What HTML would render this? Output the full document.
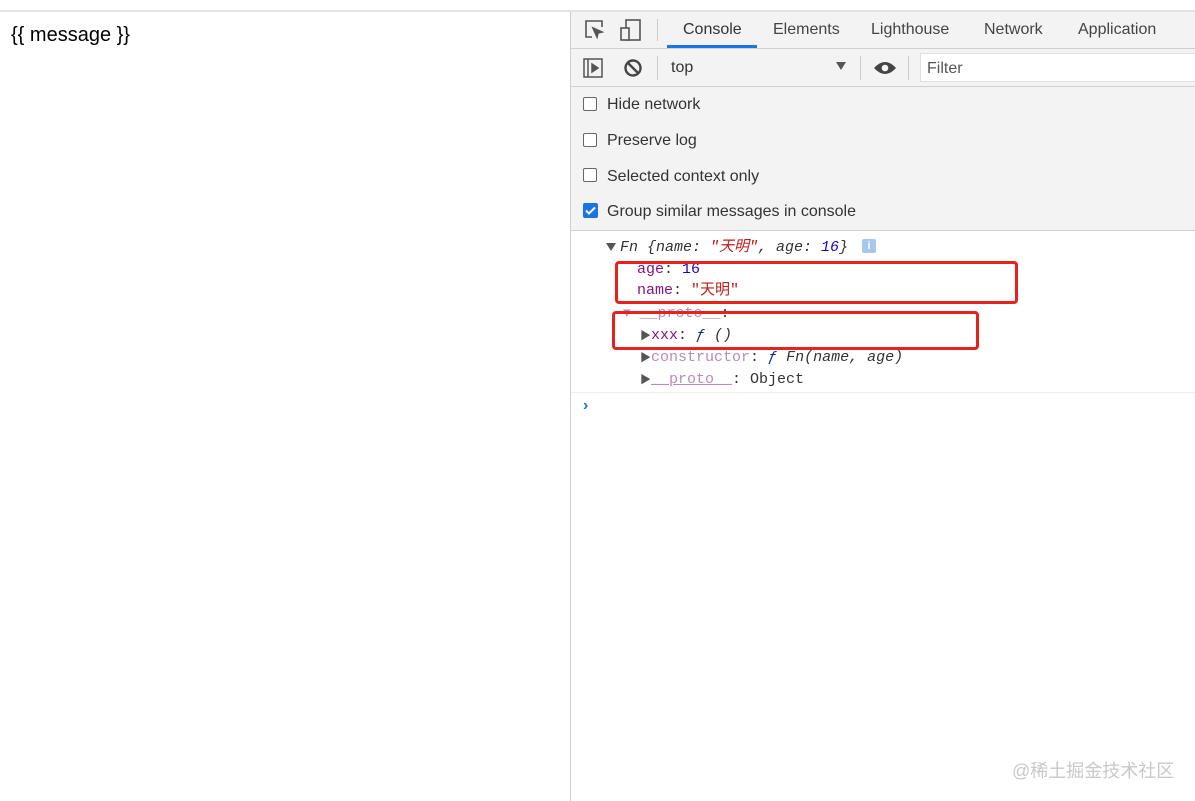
<!DOCTYPE html>
<html><head><meta charset="utf-8"><style>
*{margin:0;padding:0;box-sizing:border-box}
body{width:1195px;height:801px;background:#fff;position:relative;overflow:hidden;font-family:"Liberation Sans","Noto Sans CJK SC",sans-serif}
.abs{position:absolute}
.ui{font-family:"Liberation Sans","Noto Sans CJK SC",sans-serif;font-size:16px;color:#333}
.mono{font-family:"Liberation Mono","Noto Sans CJK SC",monospace;font-size:15px;line-height:18px;white-space:pre}
.cb{position:absolute;width:14px;height:14px;border:1.5px solid #666;border-radius:2px;background:#fff}
</style></head><body>
<div class="abs" style="left:0;top:10px;width:1195px;height:2px;background:#e3e3e3"></div>
<div class="abs" style="left:11px;top:24px;font-size:20px;color:#000">{{ message }}</div>
<div class="abs" style="left:570px;top:12px;width:625px;height:789px;border-left:1px solid #d0d0d0;background:#fff"></div>
<div class="abs" style="left:571px;top:12px;width:624px;height:218px;background:#f3f3f3"></div>
<div class="abs" style="left:571px;top:48px;width:624px;height:1px;background:#d0d0d0"></div>
<div class="abs" style="left:571px;top:86px;width:624px;height:1px;background:#d0d0d0"></div>
<div class="abs" style="left:571px;top:230px;width:624px;height:1px;background:#d0d0d0"></div>
<svg class="abs" style="left:584px;top:19px" width="22" height="22" viewBox="0 0 22 22" fill="none" stroke="#555" stroke-width="1.6"><path d="M8 18H2V2h16v6"/><path d="M9 9l9 4-4 1-1 4z" fill="#555"/></svg>
<svg class="abs" style="left:619px;top:18px" width="24" height="24" viewBox="0 0 24 24" fill="none" stroke="#555" stroke-width="1.6"><rect x="7" y="2" width="14" height="20"/><rect x="2" y="10" width="8" height="12" fill="#f3f3f3"/></svg>
<div class="abs" style="left:657px;top:19px;width:1px;height:22px;background:#ccc"></div>
<div class="abs ui" style="left:683px;top:21px">Console</div>
<div class="abs" style="left:667px;top:45px;width:90px;height:3px;background:#1a73e8"></div>
<div class="abs ui" style="left:773px;top:21px;color:#444">Elements</div>
<div class="abs ui" style="left:871px;top:21px;color:#444">Lighthouse</div>
<div class="abs ui" style="left:984px;top:21px;color:#444">Network</div>
<div class="abs ui" style="left:1078px;top:21px;color:#444">Application</div>
<svg class="abs" style="left:582px;top:57px" width="22" height="22" viewBox="0 0 22 22" fill="none" stroke="#555" stroke-width="1.5"><rect x="2" y="2" width="18" height="18"/><path d="M6 2v18"/><path d="M10 7l6 4-6 4z" fill="#555"/></svg>
<svg class="abs" style="left:623px;top:58px" width="20" height="20" viewBox="0 0 20 20" fill="none" stroke="#444" stroke-width="2.4"><circle cx="10" cy="10" r="7.5"/><path d="M5 5l10 10"/></svg>
<div class="abs" style="left:657px;top:56px;width:1px;height:24px;background:#ccc"></div>
<div class="abs ui" style="left:671px;top:59px">top</div>
<div class="abs" style="left:836px;top:62px;width:0;height:0;border-left:5px solid transparent;border-right:5px solid transparent;border-top:8px solid #555"></div>
<div class="abs" style="left:860px;top:56px;width:1px;height:24px;background:#ccc"></div>
<svg class="abs" style="left:873px;top:58px" width="24" height="20" viewBox="0 0 24 20"><path d="M1 10Q12-2 23 10Q12 22 1 10z" fill="#444"/><circle cx="12" cy="10" r="3.3" fill="#f3f3f3"/></svg>
<div class="abs" style="left:908px;top:56px;width:1px;height:24px;background:#ccc"></div>
<div class="abs" style="left:920px;top:53px;width:280px;height:29px;background:#fff;border:1px solid #e0e0e0"></div>
<div class="abs ui" style="left:927px;top:60px;color:#555">Filter</div>
<div class="cb" style="left:583px;top:97px"></div><div class="abs ui" style="left:607px;top:96px">Hide network</div>
<div class="cb" style="left:583px;top:133px"></div><div class="abs ui" style="left:607px;top:132px">Preserve log</div>
<div class="cb" style="left:583px;top:168px"></div><div class="abs ui" style="left:607px;top:168px">Selected context only</div>
<div class="abs" style="left:583px;top:203px;width:15px;height:15px;background:#1a73e8;border-radius:2px"><svg width="15" height="15" viewBox="0 0 15 15"><path d="M3 7.5l3 3 6-6" stroke="#fff" stroke-width="2" fill="none"/></svg></div>
<div class="abs ui" style="left:607px;top:203px">Group similar messages in console</div>
<div class="abs" style="left:606px;top:243px;width:0;height:0;border-left:5px solid transparent;border-right:5px solid transparent;border-top:8px solid #555"></div>
<div class="abs mono" style="left:620px;top:239px;font-style:italic;color:#333">Fn {name: <span style="color:#c41a16">"天明"</span>, age: <span style="color:#1c00cf">16</span>}</div>
<div class="abs" style="left:862px;top:239px;width:14px;height:14px;background:#a8c7f0;border-radius:2px;color:#fff;font-size:11px;text-align:center;line-height:14px;font-weight:bold">i</div>
<div class="abs mono" style="left:637px;top:261px;color:#881280">age<span style="color:#333">: </span><span style="color:#1c00cf">16</span></div>
<div class="abs mono" style="left:637px;top:282px;color:#881280">name<span style="color:#333">: </span><span style="color:#c41a16">"天明"</span></div>
<div class="abs mono" style="left:623px;top:305px;color:#b98bb8">▾ __proto__<span style="color:#333">:</span></div>
<div class="abs mono" style="left:640px;top:327px;color:#881280"><span style="color:#555;font-size:11px">▶</span>xxx<span style="color:#333">: </span><i style="color:#0d22aa">ƒ</i><i style="color:#333"> ()</i></div>
<div class="abs mono" style="left:640px;top:349px;color:#b98bb8"><span style="color:#555;font-size:11px">▶</span>constructor<span style="color:#333">: </span><i style="color:#0d22aa">ƒ</i><i style="color:#333"> Fn(name, age)</i></div>
<div class="abs mono" style="left:640px;top:371px;color:#b98bb8"><span style="color:#555;font-size:11px">▶</span><u>__proto__</u><span style="color:#333">: Object</span></div>
<div class="abs" style="left:571px;top:392px;width:624px;height:1px;background:#eee"></div>
<div class="abs" style="left:583px;top:397px;color:#1a73e8;font-size:16px;font-weight:bold">›</div>
<div class="abs" style="left:615px;top:261px;width:403px;height:43px;border:3px solid #e8221b;border-radius:4px"></div>
<div class="abs" style="left:612px;top:311px;width:367px;height:39px;border:3px solid #e8221b;border-radius:4px"></div>
<div class="abs" style="left:1012px;top:757px;font-size:18px;color:#c8c8c8">@稀土掘金技术社区</div>
</body></html>
